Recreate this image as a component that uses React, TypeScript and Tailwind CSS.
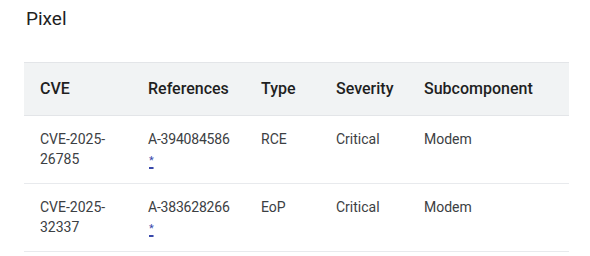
const rows = [
  { cve: ['CVE-2025-', '26785'], ref: 'A-394084586', type: 'RCE', severity: 'Critical', sub: 'Modem' },
  { cve: ['CVE-2025-', '32337'], ref: 'A-383628266', type: 'EoP', severity: 'Critical', sub: 'Modem' },
];

export default function App() {
  return (
    <div className="bg-white w-[590px] h-[256px] pl-6 pt-[7px] font-['Roboto',sans-serif] text-[#202124]">
      <h2 className="text-[19px] leading-6 text-[#1f1f1f] pl-[2px]">Pixel</h2>

      <table className="mt-[31px] w-[545px] table-fixed border-collapse text-left">
        <colgroup>
          <col className="w-[108px]" />
          <col className="w-[113px]" />
          <col className="w-[75px]" />
          <col className="w-[88px]" />
          <col />
        </colgroup>
        <thead>
          <tr className="bg-[#f1f3f4] border-y border-[#e3e5e8]">
            {['CVE', 'References', 'Type', 'Severity', 'Subcomponent'].map((h) => (
              <th key={h} className="px-4 pt-[14px] pb-[14px] text-[16px] leading-6 font-medium text-[#1f1f1f]">
                {h}
              </th>
            ))}
          </tr>
        </thead>
        <tbody className="text-[14px] leading-5 text-[#3c4043]">
          {rows.map((r) => (
            <tr key={r.ref} className="border-b border-[#e8eaed] align-top">
              <td className="px-4 pt-[13px] pb-[12px]">
                {r.cve[0]}
                <br />
                {r.cve[1]}
              </td>
              <td className="pl-4 pr-0 pt-[13px] pb-[12px] whitespace-nowrap tracking-[-0.2px]">
                {r.ref}
                <br />
                <a href="#" className="text-[#3949ab] underline underline-offset-[3px] decoration-[1.5px] text-[11px] pl-[1px]">*</a>
              </td>
              <td className="px-4 pt-[13px] pb-[12px]">{r.type}</td>
              <td className="px-4 pt-[13px] pb-[12px]">{r.severity}</td>
              <td className="px-4 pt-[13px] pb-[12px]">{r.sub}</td>
            </tr>
          ))}
        </tbody>
      </table>
    </div>
  );
}
